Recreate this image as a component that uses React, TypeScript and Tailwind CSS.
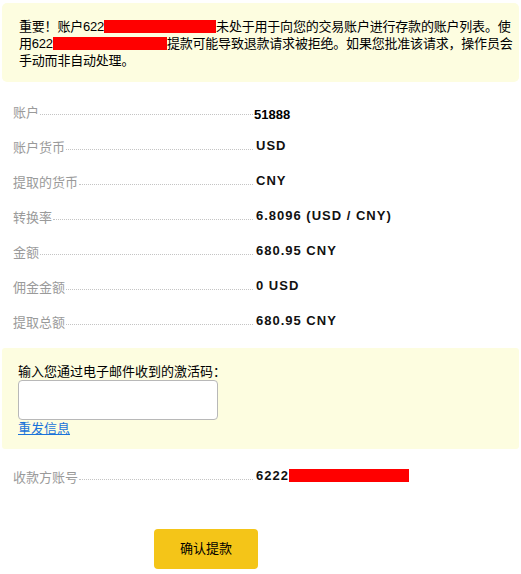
const rows = [
  { label: "账户", value: "51888", first: true },
  { label: "账户货币", value: "USD" },
  { label: "提取的货币", value: "CNY" },
  { label: "转换率", value: "6.8096 (USD / CNY)" },
  { label: "金额", value: "680.95 CNY" },
  { label: "佣金金额", value: "0 USD" },
  { label: "提取总额", value: "680.95 CNY" },
];

const cjk = "font-['Liberation_Sans','Noto_Sans_CJK_SC',sans-serif]";

function Redact({ w }: { w: string }) {
  return <span className={`inline-block ${w} h-[13px] bg-[#ff0000] align-[-2px]`} />;
}

function Row({ label, children, first }: { label: string; children: React.ReactNode; first?: boolean }) {
  return (
    <div className="flex items-center h-[35px]">
      {/* label + dotted leader */}
      <div className="flex items-center w-[253px] pl-[13px]">
        <span className="text-[13px] leading-[17px] text-[#9a9a9a] whitespace-nowrap">{label}</span>
        <span className="flex-1 ml-[1px] mt-[3px] border-t border-dotted border-[#c4c4c4]" />
      </div>
      <div className={first ? "pl-[1px] pt-[2px]" : "pl-[3px] pb-[6px]"}>{children}</div>
    </div>
  );
}

export default function App() {
  return (
    <div className={`w-[521px] h-[574px] bg-white ${cjk} text-black`}>
      {/* NOTICE */}
      <div className="mx-[2px] mt-[3px] h-[79px] rounded-[5px] bg-[#fdfde0] pl-[17px] pt-[15px] text-[13px] leading-[17px] tracking-[-0.2px]">
        <div className="whitespace-nowrap">
          重要！账户622<Redact w="w-[112px]" />未处于用于向您的交易账户进行存款的账户列表。使
        </div>
        <div className="whitespace-nowrap">
          用622<Redact w="w-[114px]" />提款可能导致退款请求被拒绝。如果您批准该请求，操作员会
        </div>
        <div className="whitespace-nowrap">手动而非自动处理。</div>
      </div>

      {/* DETAILS */}
      <div className="pt-[13px]">
        {rows.map((r) => (
          <Row key={r.label} label={r.label} first={r.first}>
            {r.first ? (
              <span className="text-[13px] font-bold leading-[17px]">{r.value}</span>
            ) : (
              <span className="text-[13px] font-bold leading-[17px] tracking-[1px] text-[#111]">{r.value}</span>
            )}
          </Row>
        ))}
      </div>

      {/* CODE INPUT */}
      <div className="mx-[2px] mt-[8px] h-[101px] rounded-[3px] bg-[#fdfde0] pl-[16px] pt-[15px]">
        <div className="text-[13px] leading-[17px]">输入您通过电子邮件收到的激活码：</div>
        <input
          type="text"
          className="block w-[200px] h-[40px] rounded-[4px] border border-[#b8b8b8] bg-white outline-none"
        />
        <a href="#" className="block w-fit text-[13px] leading-[17px] text-[#1a73d9] underline">
          重发信息
        </a>
      </div>

      {/* PAYEE */}
      <div className="pt-[11px]">
        <Row label="收款方账号">
          <span className="whitespace-nowrap text-[13px] font-bold leading-[17px] tracking-[1px] text-[#111]">
            6222<Redact w="w-[120px]" />
          </span>
        </Row>
      </div>

      {/* SUBMIT */}
      <div className="pt-[34px] pl-[154px]">
        <button className="w-[104px] h-[40px] rounded-[4px] bg-[#f4c518] text-[13px] text-black">确认提款</button>
      </div>
    </div>
  );
}
